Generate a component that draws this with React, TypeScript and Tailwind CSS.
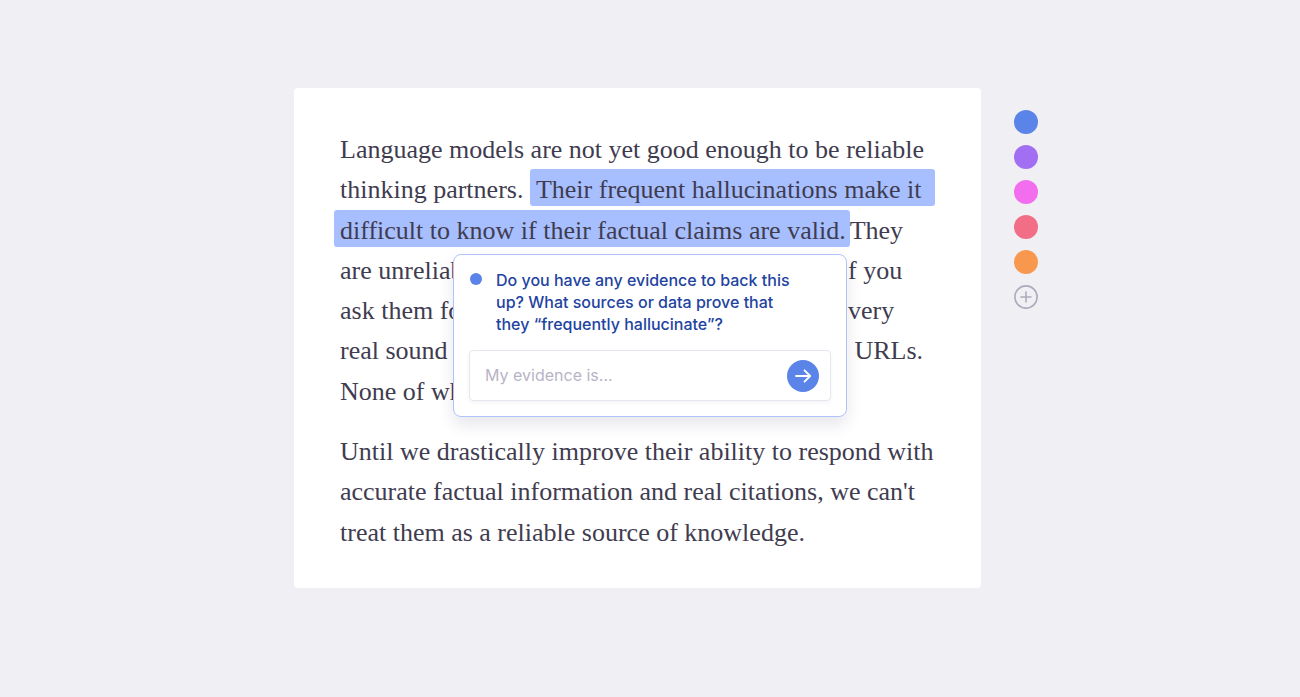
import type { ReactNode } from "react";

const swatches = [
  { name: "Blue", color: "bg-[#5b84e8]" },
  { name: "Purple", color: "bg-[#a26ef2]" },
  { name: "Pink", color: "bg-[#f26eee]" },
  { name: "Red", color: "bg-[#f26e86]" },
  { name: "Orange", color: "bg-[#f8984e]" },
];

const highlight = "rounded-[3px] bg-[#a8bfff] pl-[6px] pt-[6px] pb-[2px] text-inherit";

// A line of the article that runs behind the open prompt.
function CoveredLine({ start, children }: { start: string; children?: ReactNode }) {
  return (
    <span className="flex">
      <span className="w-[508px]">{start}</span>
      <span className="whitespace-pre">{children}</span>
    </span>
  );
}

function EvidencePrompt() {
  return (
    <form
      className="absolute left-[159px] top-[166px] w-[394px] rounded-lg border border-[#b0c4fb] bg-white px-[15px] pb-[15px] pt-[14px] font-['Inter',sans-serif] shadow-[0_8px_16px_rgba(60,60,110,0.12)]"
      onSubmit={(event) => event.preventDefault()}
    >
      <div className="flex gap-[14px] pl-px">
        <span className="mt-1 size-3 shrink-0 rounded-full bg-[#5b84e8]" />
        <label htmlFor="evidence" className="text-[16px] font-medium leading-[22px] text-[#2243a0]">
          <span className="block whitespace-nowrap">Do you have any evidence to back this</span>
          <span className="block whitespace-nowrap">up? What sources or data prove that</span>
          <span className="block whitespace-nowrap">they “frequently hallucinate”?</span>
        </label>
      </div>
      <div className="mt-[15px] flex h-[51px] items-center rounded border border-[#e6e6ee] pl-[15px] pr-[11px] shadow-[0_2px_4px_rgba(60,60,110,0.05)]">
        <input
          id="evidence"
          type="text"
          placeholder="My evidence is..."
          className="min-w-0 flex-1 bg-transparent text-[16px] text-[#3f3c50] outline-none placeholder:text-[#b7b4c6]"
        />
        <button
          type="submit"
          aria-label="Send"
          className="flex size-8 items-center justify-center rounded-full bg-[#5b84e8] text-white"
        >
          <svg viewBox="0 0 32 32" className="size-8" fill="none" stroke="currentColor" strokeWidth="1.8" strokeLinecap="round" strokeLinejoin="round">
            <path d="M9 16h14M17.5 10.3 23.2 16l-5.7 5.7" />
          </svg>
        </button>
      </div>
    </form>
  );
}

export default function App() {
  return (
    <main className="flex min-h-screen items-start justify-center gap-[33px] bg-[#f0eff4] pb-20 pl-8 pt-[88px]">
      <article className="relative w-full max-w-[687px] rounded bg-white px-[46px] pb-[35px] pt-[42px] font-['Liberation_Serif',serif] text-[26px] leading-[1.55] text-[#3f3c50]">
        <p className="whitespace-nowrap">
          <span className="block">Language models are not yet good enough to be reliable</span>
          <span className="block">
            thinking partners. <mark className={`${highlight} pr-[14px]`}>Their frequent hallucinations make it</mark>
          </span>
          <span className="-ml-[6px] block">
            <mark className={`${highlight} pr-1`}>difficult to know if their factual claims are valid.</mark>They
          </span>
          <CoveredLine start="are unreliab">f you</CoveredLine>
          <CoveredLine start="ask them fo">very</CoveredLine>
          <CoveredLine start="real sound"> URLs.</CoveredLine>
          <CoveredLine start="None of wh" />
        </p>
        <p className="mt-5 whitespace-nowrap">
          <span className="block">Until we drastically improve their ability to respond with</span>
          <span className="block">accurate factual information and real citations, we can't</span>
          <span className="block">treat them as a reliable source of knowledge.</span>
        </p>
        <EvidencePrompt />
      </article>
      <div className="mt-[22px] flex flex-col gap-[11px]">
        {swatches.map((swatch) => (
          <button key={swatch.name} type="button" aria-label={swatch.name} className={`size-6 rounded-full ${swatch.color}`} />
        ))}
        <button type="button" aria-label="Add colour" className="size-6 text-[#aeabbd]">
          <svg viewBox="0 0 24 24" className="size-6" fill="none" stroke="currentColor" strokeWidth="1.6" strokeLinecap="round">
            <circle cx="12" cy="12" r="11.1" />
            <path d="M12 7v10M7 12h10" />
          </svg>
        </button>
      </div>
    </main>
  );
}
